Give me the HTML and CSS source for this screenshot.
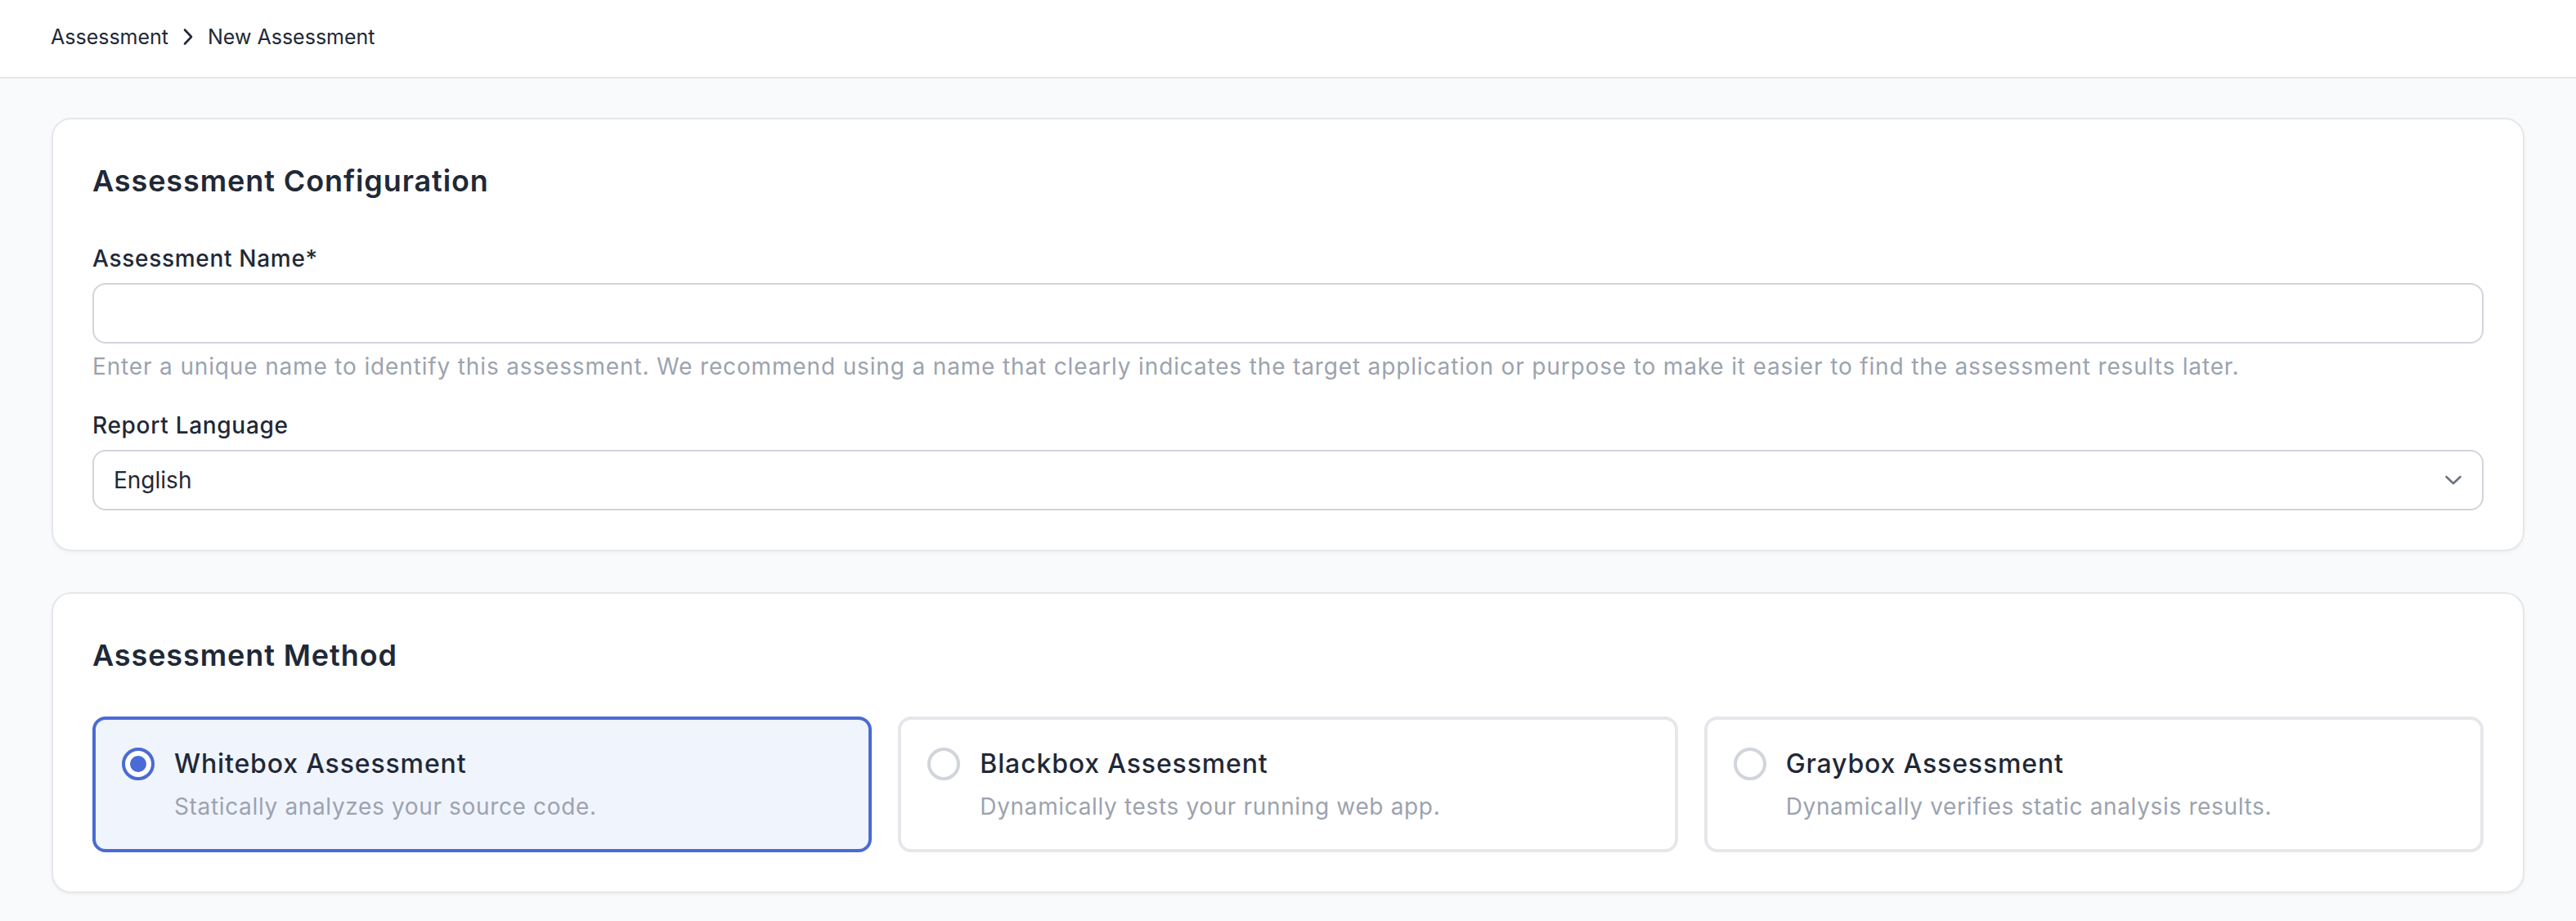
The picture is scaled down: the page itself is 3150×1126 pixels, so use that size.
FILE: index.html
```html
<!DOCTYPE html>
<html lang="en">
<head>
<meta charset="utf-8">
<title>New Assessment</title>
<link rel="stylesheet" href="styles.css">
</head>
<body>
<header class="topbar">
  <nav class="breadcrumb">
    <span class="crumb">Assessment</span>
    <svg class="crumb-sep" width="20" height="28" viewBox="0 0 20 28"><path d="M6 5.5 L14 14 L6 22.5" fill="none" stroke="#1f2937" stroke-width="2.6" stroke-linecap="round" stroke-linejoin="round"/></svg>
    <span class="crumb">New Assessment</span>
  </nav>
</header>
<main class="page">
  <section class="card">
    <h2 class="card-title">Assessment Configuration</h2>
    <div class="field">
      <label class="field-label" for="name">Assessment Name*</label>
      <input class="text-input" id="name" type="text">
      <p class="field-help">Enter a unique name to identify this assessment. We recommend using a name that clearly indicates the target application or purpose to make it easier to find the assessment results later.</p>
    </div>
    <div class="field">
      <label class="field-label">Report Language</label>
      <div class="select">
        <span class="select-value">English</span>
        <svg class="select-chevron" width="22" height="14" viewBox="0 0 22 14"><path d="M2.5 3 L11 11 L19.5 3" fill="none" stroke="#6b7280" stroke-width="2.6" stroke-linecap="round" stroke-linejoin="round"/></svg>
      </div>
    </div>
  </section>

  <section class="card">
    <h2 class="card-title">Assessment Method</h2>
    <div class="method-grid">
      <div class="method is-selected">
        <span class="radio"><svg width="40" height="40" viewBox="0 0 40 40"><circle cx="20" cy="20" r="18" fill="#fff" stroke="#4a6bd5" stroke-width="4"/><circle cx="20" cy="20" r="10" fill="#4a6bd5"/></svg></span>
        <div class="method-text">
          <div class="method-title">Whitebox Assessment</div>
          <div class="method-desc">Statically analyzes your source code.</div>
        </div>
      </div>
      <div class="method">
        <span class="radio"><svg width="40" height="40" viewBox="0 0 40 40"><circle cx="20" cy="20" r="18" fill="#fff" stroke="#d1d5db" stroke-width="4"/></svg></span>
        <div class="method-text">
          <div class="method-title">Blackbox Assessment</div>
          <div class="method-desc">Dynamically tests your running web app.</div>
        </div>
      </div>
      <div class="method">
        <span class="radio"><svg width="40" height="40" viewBox="0 0 40 40"><circle cx="20" cy="20" r="18" fill="#fff" stroke="#d1d5db" stroke-width="4"/></svg></span>
        <div class="method-text">
          <div class="method-title">Graybox Assessment</div>
          <div class="method-desc">Dynamically verifies static analysis results.</div>
        </div>
      </div>
    </div>
  </section>
</main>
</body>
</html>
```
FILE: styles.css
```css
* { box-sizing: border-box; }

html, body {
  margin: 0;
  padding: 0;
}

body {
  font-family: Inter, "Noto Sans", "Liberation Sans", sans-serif;
  color: #1f2937;
  background: #f9fafb;
  min-height: 100vh;
}

.topbar {
  height: 96px;
  background: #ffffff;
  border-bottom: 2px solid #e5e7eb;
  display: flex;
  align-items: center;
  padding: 0 62px;
}

.breadcrumb {
  display: flex;
  align-items: center;
  gap: 14px;
  font-size: 25px;
  line-height: 36px;
  color: #1f2937;
  margin-top: -4px;
}

.crumb-sep { display: block; }

.page {
  padding: 48px 63px;
  display: flex;
  flex-direction: column;
  gap: 50px;
}

.card {
  background: #ffffff;
  border: 2px solid #e5e7eb;
  border-radius: 24px;
  box-shadow: 0 2px 4px rgba(17, 24, 39, 0.04);
  padding: 48px 48px 48px 48px;
}

.card-title {
  margin: 0 0 48px 0;
  font-size: 36px;
  line-height: 54px;
  font-weight: 600;
  letter-spacing: 0.9px;
  color: #1f2937;
}

.field { display: flex; flex-direction: column; }
.field + .field { margin-top: 32px; }

.field-label {
  font-size: 28px;
  line-height: 40px;
  font-weight: 500;
  letter-spacing: 0.7px;
  color: #1f2937;
  margin-bottom: 10px;
}

.text-input {
  height: 74px;
  border: 2px solid #d1d5db;
  border-radius: 16px;
  background: #ffffff;
  font: inherit;
  font-size: 28px;
  padding: 0 24px;
  outline: none;
}

.field-help {
  margin: 8px 0 0 0;
  font-size: 28px;
  line-height: 40px;
  letter-spacing: 0.85px;
  color: #9ca3af;
}

.select {
  height: 74px;
  border: 2px solid #d1d5db;
  border-radius: 16px;
  background: #ffffff;
  display: flex;
  align-items: center;
  justify-content: space-between;
  padding: 0 24px 0 24px;
}

.select-value {
  font-size: 28px;
  color: #1f2937;
}

.select-chevron { display: block; }

.method-grid {
  display: grid;
  grid-template-columns: repeat(3, 1fr);
  gap: 32px;
}

.method {
  border: 4px solid #e5e7eb;
  border-radius: 16px;
  background: #ffffff;
  padding: 30px 32px 32px 32px;
  display: flex;
  align-items: flex-start;
  gap: 24px;
}

.method.is-selected {
  border-color: #4a6bd5;
  background: #f0f4fd;
}

.radio {
  height: 48px;
  display: flex;
  align-items: center;
  flex: none;
}

.radio svg { display: block; }

.method-text {
  display: flex;
  flex-direction: column;
  gap: 8px;
}

.method-title {
  font-size: 32px;
  line-height: 48px;
  font-weight: 500;
  letter-spacing: 0.85px;
  color: #1f2937;
}

.method-desc {
  font-size: 28px;
  line-height: 40px;
  letter-spacing: 0.65px;
  color: #9ca3af;
}
```
